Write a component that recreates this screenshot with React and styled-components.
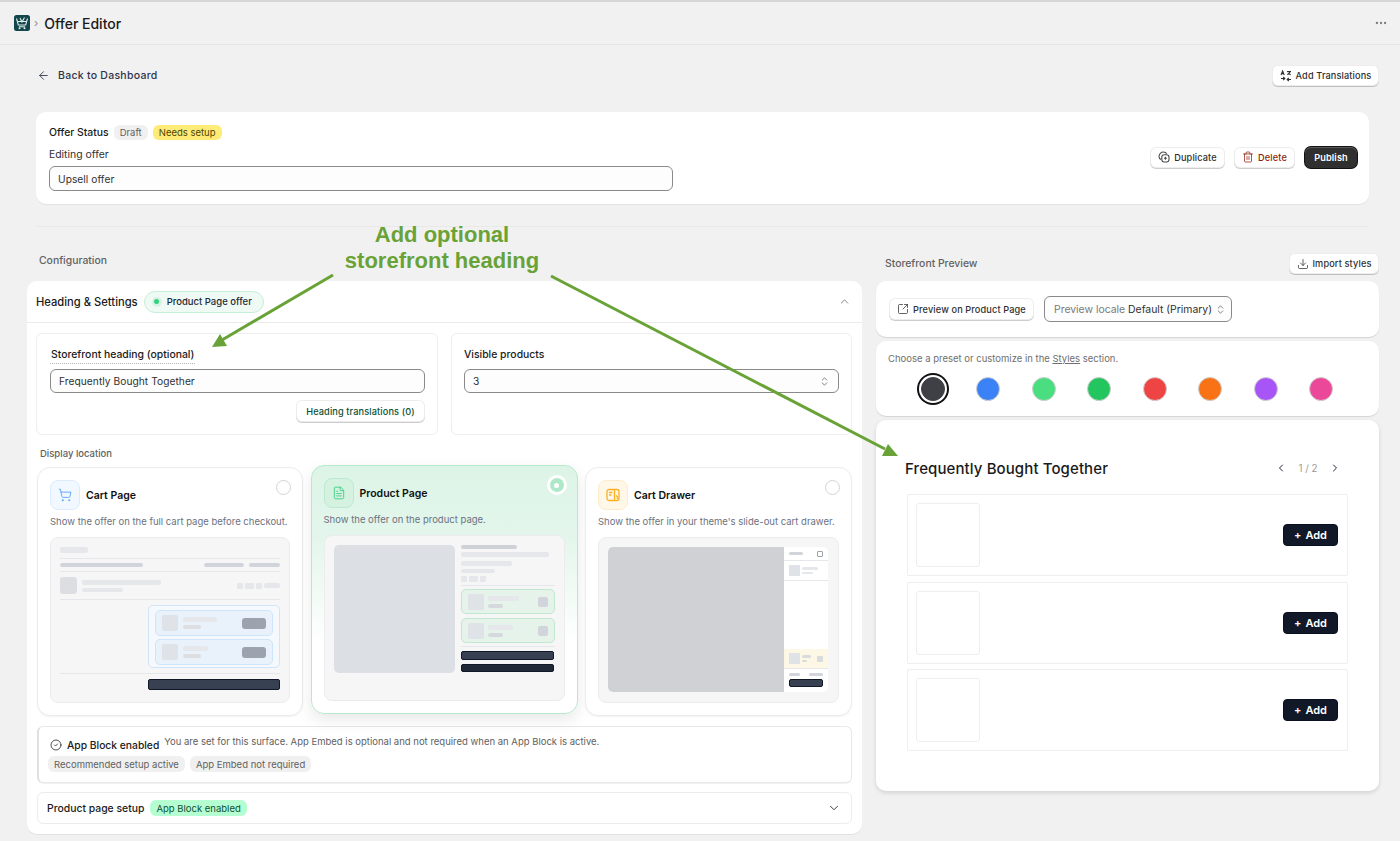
import React from "react";
import styled, { createGlobalStyle } from "styled-components";
import {
  ArrowLeft, Ellipsis, Trash2, ChevronUp, ChevronDown, ChevronLeft, ChevronRight,
  ChevronsUpDown, ShoppingCart, FileText, CircleCheck, SquareArrowOutUpRight, Download,
} from "lucide-react";

const Global = createGlobalStyle`
  html, body { margin: 0; padding: 0; background: #f1f1f1; }
  body { font-family: Inter, "Liberation Sans", sans-serif; color: #1a1a1a; -webkit-font-smoothing: antialiased; }
  * { box-sizing: border-box; }
`;

const Screen = styled.div`
  position: relative; width: 1400px; height: 841px; overflow: hidden; background: #f1f1f1;
`;
const TopBar = styled.header`
  height: 45px; border-top: 2px solid #d6d6d6; border-bottom: 1px solid #e6e6e6;
  display: flex; align-items: center; padding: 0 12px 0 14px; color: #1a1a1a;
`;
const Crumb = styled.span`color: #8a8a8a; font-size: 11px; margin: 0 6px 0 4px;`;
const PageTitle = styled.h1`margin: 0; font-size: 14px; font-weight: 500; letter-spacing: 0;`;
const TopMenu = styled.div`margin-left: auto; display: flex; color: #7a7a7a;`;
const Main = styled.main`padding: 20px 21px 0 27px;`;
const BackRow = styled.div`
  height: 21px; display: flex; align-items: center; justify-content: space-between; padding-left: 10px;
`;
const BackLink = styled.span`
  display: flex; align-items: center; gap: 8px; font-size: 10.5px; font-weight: 500; color: #303449; letter-spacing: .27px;
`;
const Button = styled.button`
  display: inline-flex; align-items: center; justify-content: center; gap: 4px; height: ${p => p.$h || 21}px;
  width: ${p => p.$w}px; padding: 0; border: 0; border-radius: 6px; background: #fff; font: 500 9.2px Inter, sans-serif;
  letter-spacing: .12px; color: ${p => p.$color || "#303030"}; white-space: nowrap;
  box-shadow: 0 1px 0 rgba(0,0,0,.2), inset 0 0 0 1px rgba(0,0,0,.07);
`;
const PublishButton = styled(Button)`
  margin-left: 1px; background: #303030; color: #fff; font-weight: 600;
  box-shadow: 0 0 0 1px #111, inset 0 1px 0 rgba(255,255,255,.2);
`;
const StatusCard = styled.section`
  margin: 26px 10px 0 9px; height: 92px; background: #fff; border-radius: 10px; padding: 13px 12px 0 13px;
  display: flex; justify-content: space-between; box-shadow: 0 1px 0 rgba(0,0,0,.06);
`;
const StatusLeft = styled.div`display: flex; flex-direction: column;`;
const StatusRow = styled.div`display: flex; align-items: center; gap: 5px; height: 15px;`;
const StrongLabel = styled.span`font-size: 10.4px; font-weight: 500; color: #1a1a1a;`;
const Badge = styled.span`
  display: inline-flex; align-items: center; height: ${p => p.$h || 15}px; padding: 0 ${p => p.$px || 6}px; border-radius: 6px;
  font-size: ${p => p.$fs || 9.5}px; color: ${p => p.$color || "#616161"}; background: ${p => p.$bg || "#f0f0f0"}; white-space: nowrap;
`;
const FieldCaption = styled.span`font-size: 10.4px; color: #303030; margin-top: 8px; line-height: 14px;`;
const TextField = styled.div`
  width: ${p => p.$w || "100%"}; height: ${p => p.$h || 25}px; border-radius: 6px; background: #fdfdfd;
  border: 1px solid #8a8a8a; display: flex; align-items: center; justify-content: space-between;
  padding: 0 8px 0 8px; font-size: 10.2px; color: #303030; letter-spacing: .05px; margin-top: ${p => p.$mt || 0}px;
`;
const StatusActions = styled.div`
  display: flex; align-items: center; gap: 9px; height: 64px;
`;
const Rule = styled.hr`margin: 22px 10px 0 9px; border: 0; height: 1px; background: #e9e9e9;`;
const Columns = styled.div`
  margin-top: 26px; display: grid; grid-template-columns: 835px 503px; column-gap: 14px; align-items: start;
`;
const Column = styled.div`display: flex; flex-direction: column;`;
const ConfigLabel = styled.div`
  height: 28px; padding: 1px 0 0 12px; font-size: 10.4px; font-weight: 500; color: #616161; line-height: 14px;
`;
const PreviewHead = styled.div`
  height: 21px; margin-bottom: 7px; display: flex; align-items: center; justify-content: space-between; padding-left: 9px;
`;
const PreviewLabel = styled.span`font-size: 10.4px; font-weight: 500; color: #616161;`;
const ConfigCard = styled.section`
  height: 553px; background: #fff; border-radius: 10px; box-shadow: 0 1px 0 rgba(0,0,0,.06);
`;
const ConfigHead = styled.div`
  height: 42px; border-bottom: 1px solid #ebebeb; display: flex; align-items: center; padding: 0 11px 0 9px; gap: 6px;
`;
const ConfigTitle = styled.h2`margin: 0; font-size: 11.2px; font-weight: 500; color: #1a1a1a;`;
const OfferPill = styled.span`
  display: inline-flex; align-items: center; height: 22px; width: 120px; padding-left: 7px; gap: 5px; border-radius: 11px;
  background: #effaf4; border: 1px solid #c5efd8; font-size: 9.5px; font-weight: 500; color: #1f2937;
`;
const PillDot = styled.i`
  width: 10px; height: 10px; border-radius: 50%; background: #d6f3e2; display: flex; align-items: center; justify-content: center;
  &::after { content: ""; width: 5px; height: 5px; border-radius: 50%; background: #34d17f; }
`;
const HeadChevron = styled.span`margin-left: auto; display: flex; color: #6b6b6b;`;
const ConfigBody = styled.div`padding: 10px 10px 0 9px;`;
const FieldGrid = styled.div`display: grid; grid-template-columns: 402px 401px; column-gap: 13px;`;
const FieldCard = styled.div`
  height: 102px; border: 1px solid #eeeeee; border-radius: 6px; padding: 14px 12px 0 ${p => p.$pl || 12}px; display: flex; flex-direction: column;
`;
const FieldLabel = styled.span`
  align-self: flex-start; font-size: 10.4px; font-weight: 500; color: #1a1a1a; line-height: 14px; padding: 0 ${p => (p.$dotted ? 1 : 0)}px 1px;
  border-bottom: ${p => (p.$dotted ? "1px dotted #b5b5b5" : "1px solid transparent")};
`;
const RightAlign = styled.div`display: flex; justify-content: flex-end; margin-top: 7px;`;
const SectionLabel = styled.div`
  margin: 12px 0 6px 4px; font-size: 9.5px; font-weight: 500; color: #616161; line-height: 14px;
`;
const LocationGrid = styled.div`
  margin-left: 1px; display: grid; grid-template-columns: 266px 267px 267px; column-gap: 7.5px;
`;
const LocationCard = styled.div`
  position: relative; height: 249px; border-radius: 13px; padding: 12px 12px 0 12px; background: #fff;
  border: 1px solid ${p => (p.$active ? "#b7e9cd" : "#ececec")};
  box-shadow: ${p => (p.$active ? "0 6px 16px rgba(0,0,0,.09)" : "0 1px 2px rgba(0,0,0,.05)")};
  ${p => p.$active && "transform: translateY(-2px); background: linear-gradient(180deg, #dcf4e6 0%, #e4f6ec 30%, #fff 72%);"}
`;
const LocationHead = styled.div`display: flex; align-items: center; gap: 6px;`;
const IconTile = styled.span`
  width: 30px; height: 30px; border-radius: 8px; display: flex; align-items: center; justify-content: center;
  background: ${p => p.$bg}; border: 1px solid ${p => p.$border}; color: ${p => p.$color};
`;
const LocationName = styled.span`font-size: 10.5px; font-weight: 600; color: #111;`;
const Radio = styled.span`
  position: absolute; top: 12px; right: 11px; width: 15px; height: 15px; border-radius: 50%; border: 1.5px solid #d4d4d4; background: #fff;
`;
const RadioOn = styled.span`
  position: absolute; top: 9px; right: 10px; width: 20px; height: 20px; border-radius: 50%; border: 3px solid #fff;
  background: #aee8c8; display: flex; align-items: center; justify-content: center;
  &::after { content: ""; width: 5px; height: 5px; border-radius: 50%; background: #fff; }
`;
const LocationDesc = styled.p`
  margin: 5.5px 0 9.5px; font-size: 9.5px; line-height: 12px; color: #6b7280; white-space: nowrap;
`;
const Mock = styled.div`
  height: 166px; border-radius: 8px; background: #f6f6f7; border: 1px solid #ececee; padding: ${p => p.$pad || "9px"}; display: flex;
  flex-direction: ${p => p.$row ? "row" : "column"}; gap: ${p => p.$gap || 0}px;
`;
const Bar = styled.i`
  display: block; flex: none; width: ${p => p.$w}px; height: ${p => p.$h || 4}px; border-radius: ${p => p.$r ?? 2}px;
  background: ${p => p.$c || "#e5e7eb"}; margin-top: ${p => p.$mt || 0}px;
`;
const DarkBar = styled(Bar)`border: 1px solid #111827; background: ${p => p.$c || "#374151"};`;
const MockRule = styled.div`height: 1px; background: #e6e7ea; margin: ${p => p.$m || "5px 0"};`;
const Between = styled.div`display: flex; align-items: center; justify-content: space-between; gap: ${p => p.$gap || 0}px;`;
const Hgroup = styled.div`display: flex; align-items: center; gap: ${p => p.$gap || 3}px; margin-top: ${p => p.$mt || 0}px;`;
const EndRow = styled.div`display: flex; justify-content: flex-end;`;
const Vgroup = styled.div`display: flex; flex-direction: column; gap: ${p => p.$gap || 3}px;`;
const UpsellBox = styled.div`
  align-self: flex-end; width: 132px; height: 63px; border: 1px solid #cfe5fb; background: #f5f9fe; border-radius: 5px;
  padding: 4px 6px; display: flex; flex-direction: column; gap: 3px;
`;
const UpsellRow = styled.div`
  height: ${p => p.$h || 26}px; margin-top: ${p => p.$mt || 0}px; padding: 0 6px; border-radius: 5px; border: 1px solid ${p => p.$border}; background: ${p => p.$bg};
  display: flex; align-items: center; justify-content: space-between; flex: none;
`;
const ProductSide = styled.div`flex: 1; display: flex; flex-direction: column; min-width: 0;`;
const DrawerFrame = styled.div`
  display: flex; height: 145px; border-radius: 5px; overflow: hidden; background: #fff;
`;
const DrawerBackdrop = styled.div`width: 176px; background: #cfd1d4;`;
const DrawerPanel = styled.div`flex: 1; display: flex; flex-direction: column;`;
const DrawerHead = styled.div`
  height: 14px; padding: 0 5px; display: flex; align-items: center; justify-content: space-between; border-bottom: 1px solid #e5e7eb;
`;
const DrawerClose = styled.i`width: 6px; height: 6px; border: 1px solid #9ca3af; border-radius: 1px;`;
const DrawerRow = styled.div`
  height: 20px; padding: 0 5px; display: flex; align-items: center; gap: 2px; background: ${p => p.$bg || "transparent"};
  border-bottom: 1px solid #e5e7eb; justify-content: ${p => p.$between ? "space-between" : "flex-start"}; flex: none;
`;
const DrawerSpacer = styled.div`flex: 1;`;
const DrawerFoot = styled.div`height: 23px; padding: 4px 5px 0; display: flex; flex-direction: column; gap: 3px;`;
const NoticeCard = styled.div`
  margin: 10px 0 0 1px; height: 57px; border: 1px solid #e8e8e8; border-left: 2px solid #e0e0e0; border-radius: 6px; padding: 8px 0 0 10px;
  box-shadow: 0 1px 0 rgba(0,0,0,.05);
`;
const NoticeHead = styled.div`display: flex; align-items: flex-start; gap: 5px; height: 17px; padding-left: 1px;`;
const NoticeTitle = styled.span`
  display: flex; align-items: center; gap: 5px; font-size: 10.3px; font-weight: 500; color: #1a1a1a; line-height: 16px; margin-top: 2px;
`;
const NoticeText = styled.span`font-size: 9.5px; color: #616161; line-height: 13px;`;
const NoticeBadges = styled.div`display: flex; gap: 5px; margin-top: 4px; margin-left: -1px;`;
const SetupCard = styled.div`
  margin: 9px 0 0 1px; height: 32px; border: 1px solid #ececec; border-radius: 6px; display: flex; align-items: center;
  padding: 0 10px 0 9px; gap: 6px;
`;
const PreviewPanel = styled.section`
  background: #fff; border-radius: 10px; box-shadow: 0 1px 1px rgba(0,0,0,.12); margin-bottom: ${p => p.$mb || 4}px; height: ${p => p.$h}px;
`;
const PreviewControls = styled(PreviewPanel)`display: flex; align-items: center; gap: 10px; padding: 0 0 0 13px;`;
const LocaleSelect = styled.div`
  width: 188px; height: 26px; border: 1px solid #8a8a8a; border-radius: 6px; background: #fdfdfd; display: flex; align-items: center;
  padding: 0 9px; gap: 3px; font-size: 10.4px; color: #303030; white-space: nowrap;
  svg { flex: none; margin-left: auto; }
`;
const Muted = styled.span`color: #7a7a7a;`;
const PresetPanel = styled(PreviewPanel)`padding: 12px 0 0 12px;`;
const PresetHint = styled.p`margin: 0; font-size: 9.5px; line-height: 12px; color: #6f6f6f;`;
const PresetLink = styled.span`text-decoration: underline;`;
const SwatchRow = styled.div`
  display: grid; grid-template-columns: repeat(8, 55.5px); margin: 6px 0 0 17px; justify-items: center; align-items: center; height: 36px;
`;
const Swatch = styled.span`
  width: 24px; height: 24px; border-radius: 50%; background: ${p => p.$c}; border: 1px solid #cfcfcf;
  ${p => p.$on && "box-shadow: 0 0 0 2px #fff, 0 0 0 4px #111; border-color: #3f3f46;"}
`;
const StorePanel = styled(PreviewPanel)`padding: 0 31px 0 29px; box-shadow: 0 2px 4px rgba(0,0,0,.13);`;
const StoreHead = styled.div`height: 74px; padding-top: 22px; display: flex; align-items: center; justify-content: space-between;`;
const StoreTitle = styled.h3`margin: 0; font-size: 15px; font-weight: 500; color: #1a1a1a; letter-spacing: .1px;`;
const Pager = styled.div`display: flex; align-items: center; gap: 11.500px; color: #1f2937; margin-right: 7px;`;
const PagerText = styled.span`font-size: 9.8px; color: #9a9a9a;`;
const StoreList = styled.div`display: flex; flex-direction: column; gap: 5.5px; margin-left: 2px; margin-right: 0;`;
const StoreRow = styled.div`
  height: 82px; border: 1px solid #eceeef; border-radius: 2px; padding: 8px 9px 0 8px; display: flex; justify-content: space-between;
`;
const StoreThumb = styled.div`width: 64px; height: 64px; border: 1px solid #eceeef; border-radius: 3px;`;
const AddButton = styled.button`
  align-self: center; margin-top: -8px; width: 55px; height: 22px; background: #111827; color: #fff; border: 1px solid #0b1020; border-radius: 4px;
  font: 600 11px Inter, sans-serif; display: flex; align-items: center; justify-content: center; gap: 4px; padding: 0;
`;
const Overlay = styled.svg`position: absolute; inset: 0; pointer-events: none;`;
const Callout = styled.div`
  position: absolute; left: 292px; top: 222px; width: 300px; text-align: center; font: 700 22px/26px "Liberation Sans", Arial, sans-serif;
  color: #69a236; pointer-events: none;
`;

const Logo = () => (
  <svg width="16" height="16" viewBox="0 0 16 16">
    <rect width="16" height="16" rx="2.500" fill="#12464c" />
    <path d="M2.500 3.500l1.800 6.500h7.400L13.500 3.500M4 6.500h8M5 11.800h6M6 3l2 4 2.500-4.500" fill="none" stroke="#dfeeea" strokeWidth="1.100" />
    <circle cx="5.500" cy="13.200" r="1" fill="#dfeeea" />
    <circle cx="10.500" cy="13.200" r="1" fill="#dfeeea" />
  </svg>
);
const TranslateIcon = () => (
  <svg width="12" height="12" viewBox="0 0 12 12" fill="none" stroke="#303030" strokeWidth="1.100">
    <path d="M1 5l1.600-4L4.200 5M1.600 3.600h2M7 1.500h4M9 1v1M10.200 1.500c-.4 1.400-1.300 2.600-2.900 3.200M7.800 2.800c.6.900 1.500 1.600 3 2" />
    <path d="M1 8.500h3.500M3.200 7L4.800 8.500 3.200 10M11 9.500H7.500M8.800 8L7.200 9.500 8.800 11" />
  </svg>
);
const DuplicateIcon = () => (
  <svg width="12" height="12" viewBox="0 0 12 12" fill="none" stroke="#4a4a4a" strokeWidth="1.100">
    <path d="M3 8.600A3.400 3.400 0 0 1 1 5.500 4.500 4.500 0 0 1 5.500 1c1.400 0 2.600.7 3.200 1.800" />
    <rect x="3.800" y="3.800" width="7.200" height="7.200" rx="2.400" />
    <path d="M7.400 5.800v3M5.900 7.300h3" />
  </svg>
);
const DrawerIcon = () => (
  <svg width="14" height="14" viewBox="0 0 14 14" fill="none" stroke="#fbb024" strokeWidth="1.300">
    <rect x="1" y="1.500" width="12" height="11" rx="2" />
    <path d="M8.500 1.500v11M3 4.500h3.500M3 7h2.500M10 7.500l1.500 1.500v2" />
  </svg>
);

const CartMock = () => (
  <Mock>
    <Bar $w={28} $h={6} />
    <MockRule $m="5px 0 4px" />
    <Between>
      <Bar $w={83} $h={4} $c="#d1d5db" />
      <Hgroup $gap={5}><Bar $w={40} $c="#d1d5db" /><Bar $w={31} $c="#d1d5db" /></Hgroup>
    </Between>
    <MockRule $m="4px 0 5px" />
    <Between>
      <Hgroup $gap={5}>
        <Bar $w={17} $h={17} $c="#dcdee2" $r={3} />
        <Vgroup><Bar $w={79} $h={5} /><Bar $w={41} $h={4} /></Vgroup>
      </Hgroup>
      <Hgroup $gap={2}>
        <Bar $w={6} $h={6} $r={1} /><Bar $w={9} $h={6} $r={1} /><Bar $w={6} $h={6} $r={1} />
        <Bar $w={16} $h={5} />
      </Hgroup>
    </Between>
    <MockRule $m="5px 0" />
    <UpsellBox>
      <UpsellRow $bg="#e9f2fb" $border="#cfe5fb">
        <Hgroup $gap={5}><Bar $w={16} $h={16} $c="#dfe2e6" $r={2} /><Vgroup><Bar $w={34} $h={5} /><Bar $w={18} $h={4} $c="#dcdee2" /></Vgroup></Hgroup>
        <Bar $w={24} $h={11} $c="#9ca3af" $r={3} />
      </UpsellRow>
      <UpsellRow $bg="#e9f2fb" $border="#cfe5fb">
        <Hgroup $gap={5}><Bar $w={16} $h={16} $c="#dfe2e6" $r={2} /><Vgroup><Bar $w={25} $h={5} /><Bar $w={18} $h={4} $c="#dcdee2" /></Vgroup></Hgroup>
        <Bar $w={24} $h={11} $c="#9ca3af" $r={3} />
      </UpsellRow>
    </UpsellBox>
    <MockRule $m="5px 0 5px" />
    <EndRow><DarkBar $w={132} $h={11} $r={2} /></EndRow>
  </Mock>
);

const ProductMock = () => (
  <Mock $row $gap={6} $pad="9px">
    <Bar $w={121} $h={128} $c="#dcdfe3" $r={5} />
    <ProductSide>
      <Bar $w={56} $h={4} $c="#ced1d6" />
      <Bar $w={88} $h={5} $mt={3} />
      <Bar $w={51} $h={5} $mt={4} />
      <Bar $w={34} $h={4} $mt={3} />
      <Hgroup $gap={2} $mt={3}><Bar $w={6} $h={6} $r={1} /><Bar $w={9} $h={6} $r={1} /><Bar $w={6} $h={6} $r={1} /></Hgroup>
      <MockRule $m="3px 0" />
      <UpsellRow $bg="#e6f3ea" $border="#bfe8cf" $h={25}>
        <Hgroup $gap={4}><Bar $w={16} $h={16} $c="#dfe2e6" $r={2} /><Vgroup><Bar $w={31} $h={5} /><Bar $w={15} $h={4} $c="#d5d8dc" /></Vgroup></Hgroup>
        <Bar $w={10} $h={10} $c="#d1d5db" $r={2} />
      </UpsellRow>
      <UpsellRow $bg="#e6f3ea" $border="#bfe8cf" $h={25} $mt={4}>
        <Hgroup $gap={4}><Bar $w={16} $h={16} $c="#dfe2e6" $r={2} /><Vgroup><Bar $w={25} $h={5} /><Bar $w={15} $h={4} $c="#d5d8dc" /></Vgroup></Hgroup>
        <Bar $w={10} $h={10} $c="#d1d5db" $r={2} />
      </UpsellRow>
      <MockRule $m="3px 0 4px" />
      <DarkBar $w={93} $h={9} />
      <DarkBar $w={93} $h={8} $c="#1f2937" $mt={4} />
    </ProductSide>
  </Mock>
);

const DrawerMock = () => (
  <Mock $pad="9px 10px 9px 9px">
    <DrawerFrame>
      <DrawerBackdrop />
      <DrawerPanel>
        <DrawerHead><Bar $w={14} $h={3} $c="#d1d5db" /><DrawerClose /></DrawerHead>
        <DrawerRow>
          <Bar $w={11} $h={11} $c="#dfe2e6" $r={1} />
          <Vgroup $gap={2}><Bar $w={16} $h={3} /><Bar $w={11} $h={2} /></Vgroup>
        </DrawerRow>
        <DrawerSpacer />
        <DrawerRow $bg="#fdf7e6" $between>
          <Hgroup $gap={2}>
            <Bar $w={11} $h={11} $c="#dfe2e6" $r={1} />
            <Vgroup $gap={2}><Bar $w={9} $h={3} $c="#d9dbde" /><Bar $w={5} $h={2} $c="#d9dbde" /></Vgroup>
          </Hgroup>
          <Bar $w={6} $h={6} $c="#d9dbde" $r={1} />
        </DrawerRow>
        <DrawerFoot>
          <Between><Bar $w={11} $h={3} $c="#d1d5db" /><Bar $w={14} $h={3} $c="#d1d5db" /></Between>
          <DarkBar $w={34} $h={8} />
        </DrawerFoot>
      </DrawerPanel>
    </DrawerFrame>
  </Mock>
);

const swatches = ["#3f3f46", "#3b82f6", "#4ade80", "#22c55e", "#ef4444", "#f97316", "#a855f7", "#ec4899"];

export default function App() {
  return (
    <Screen>
      <Global />
      <TopBar>
        <Logo />
        <Crumb>›</Crumb>
        <PageTitle>Offer Editor</PageTitle>
        <TopMenu><Ellipsis size={14} /></TopMenu>
      </TopBar>
      <Main>
        <BackRow>
          <BackLink><ArrowLeft size={13} strokeWidth={1.6} />Back to Dashboard</BackLink>
          <Button $w={107}><TranslateIcon />Add Translations</Button>
        </BackRow>
        <StatusCard>
          <StatusLeft>
            <StatusRow>
              <StrongLabel>Offer Status</StrongLabel>
              <Badge>Draft</Badge>
              <Badge $bg="#ffeb78" $color="#4f4700">Needs setup</Badge>
            </StatusRow>
            <FieldCaption>Editing offer</FieldCaption>
            <TextField $w="624px" $mt={4}>Upsell offer</TextField>
          </StatusLeft>
          <StatusActions>
            <Button $w={75}><DuplicateIcon />Duplicate</Button>
            <Button $w={61} $color="#8e1f0b"><Trash2 size={12} strokeWidth={1.5} />Delete</Button>
            <PublishButton $w={52}>Publish</PublishButton>
          </StatusActions>
        </StatusCard>
        <Rule />
        <Columns>
          <Column>
            <ConfigLabel>Configuration</ConfigLabel>
            <ConfigCard>
              <ConfigHead>
                <ConfigTitle>Heading &amp; Settings</ConfigTitle>
                <OfferPill><PillDot />Product Page offer</OfferPill>
                <HeadChevron><ChevronUp size={13} strokeWidth={1.5} /></HeadChevron>
              </ConfigHead>
              <ConfigBody>
                <FieldGrid>
                  <FieldCard $pl={13}>
                    <FieldLabel $dotted>Storefront heading (optional)</FieldLabel>
                    <TextField $h={24} $mt={5}>Frequently Bought Together</TextField>
                    <RightAlign><Button $w={129} $h={22} $color="#0c5132">Heading translations (0)</Button></RightAlign>
                  </FieldCard>
                  <FieldCard>
                    <FieldLabel>Visible products</FieldLabel>
                    <TextField $h={24} $mt={5}>3<ChevronsUpDown size={11} strokeWidth={1.5} color="#4a4a4a" /></TextField>
                  </FieldCard>
                </FieldGrid>
                <SectionLabel>Display location</SectionLabel>
                <LocationGrid>
                  <LocationCard>
                    <LocationHead>
                      <IconTile $bg="#f1f8ff" $border="#dcecfe" $color="#60a5fa"><ShoppingCart size={14} strokeWidth={1.6} /></IconTile>
                      <LocationName>Cart Page</LocationName>
                    </LocationHead>
                    <Radio />
                    <LocationDesc>Show the offer on the full cart page before checkout.</LocationDesc>
                    <CartMock />
                  </LocationCard>
                  <LocationCard $active>
                    <LocationHead>
                      <IconTile $bg="#d5f2e1" $border="#bce9d0" $color="#3fd088"><FileText size={14} strokeWidth={1.6} /></IconTile>
                      <LocationName>Product Page</LocationName>
                    </LocationHead>
                    <RadioOn />
                    <LocationDesc>Show the offer on the product page.</LocationDesc>
                    <ProductMock />
                  </LocationCard>
                  <LocationCard>
                    <LocationHead>
                      <IconTile $bg="#fff8e8" $border="#fdeccb" $color="#fbb024"><DrawerIcon /></IconTile>
                      <LocationName>Cart Drawer</LocationName>
                    </LocationHead>
                    <Radio />
                    <LocationDesc>Show the offer in your theme's slide-out cart drawer.</LocationDesc>
                    <DrawerMock />
                  </LocationCard>
                </LocationGrid>
                <NoticeCard>
                  <NoticeHead>
                    <NoticeTitle><CircleCheck size={12} strokeWidth={1.5} />App Block enabled</NoticeTitle>
                    <NoticeText>You are set for this surface. App Embed is optional and not required when an App Block is active.</NoticeText>
                  </NoticeHead>
                  <NoticeBadges>
                    <Badge $h={16}>Recommended setup active</Badge>
                    <Badge $h={16}>App Embed not required</Badge>
                  </NoticeBadges>
                </NoticeCard>
                <SetupCard>
                  <StrongLabel>Product page setup</StrongLabel>
                  <Badge $h={16} $bg="#b4fed2" $color="#0c5132">App Block enabled</Badge>
                  <HeadChevron><ChevronDown size={14} strokeWidth={1.6} color="#303030" /></HeadChevron>
                </SetupCard>
              </ConfigBody>
            </ConfigCard>
          </Column>
          <Column>
            <PreviewHead>
              <PreviewLabel>Storefront Preview</PreviewLabel>
              <Button $w={90}><Download size={12} strokeWidth={1.5} />Import styles</Button>
            </PreviewHead>
            <PreviewControls $h={56}>
              <Button $w={145} $h={22}><SquareArrowOutUpRight size={12} strokeWidth={1.5} />Preview on Product Page</Button>
              <LocaleSelect>
                <Muted>Preview locale</Muted> Default (Primary)
                <ChevronsUpDown size={11} strokeWidth={1.5} color="#4a4a4a" />
              </LocaleSelect>
            </PreviewControls>
            <PresetPanel $h={75}>
              <PresetHint>Choose a preset or customize in the <PresetLink>Styles</PresetLink> section.</PresetHint>
              <SwatchRow>
                {swatches.map((c, i) => <Swatch key={c} $c={c} $on={i === 0} />)}
              </SwatchRow>
            </PresetPanel>
            <StorePanel $h={371}>
              <StoreHead>
                <StoreTitle>Frequently Bought Together</StoreTitle>
                <Pager>
                  <ChevronLeft size={12} strokeWidth={2} />
                  <PagerText>1 / 2</PagerText>
                  <ChevronRight size={12} strokeWidth={2} />
                </Pager>
              </StoreHead>
              <StoreList>
                {[0, 1, 2].map(i => (
                  <StoreRow key={i}>
                    <StoreThumb />
                    <AddButton>+ <span>Add</span></AddButton>
                  </StoreRow>
                ))}
              </StoreList>
            </StorePanel>
          </Column>
        </Columns>
      </Main>
      <Overlay width="1400" height="841" viewBox="0 0 1400 841">
        <path d="M333 275L222 340" stroke="#69a236" strokeWidth="3" fill="none" />
        <path d="M212 347L220 334L227 346Z" fill="#69a236" />
        <path d="M551 276L885 449" stroke="#69a236" strokeWidth="3" fill="none" />
        <path d="M898 456L882 456L888 444Z" fill="#69a236" />
      </Overlay>
      <Callout>Add optional<br />storefront heading</Callout>
    </Screen>
  );
}
